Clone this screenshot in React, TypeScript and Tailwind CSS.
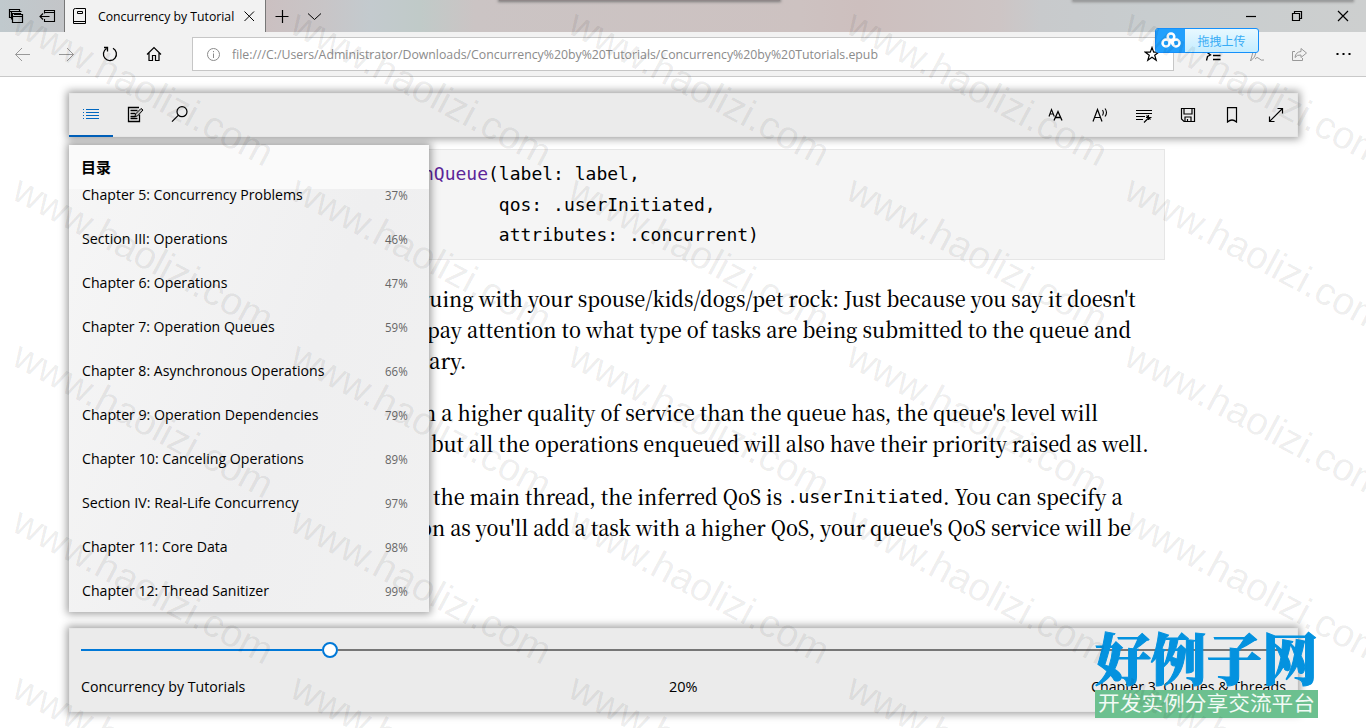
import { useLayoutEffect, useRef, useState, type ReactNode } from "react";

/** Text that is stretched or condensed horizontally to a given width. */
function Fit({ w, className = "", right = false, children }: { w: number; className?: string; right?: boolean; children: ReactNode }) {
  const ref = useRef<HTMLSpanElement>(null);
  const [s, setS] = useState(1);
  useLayoutEffect(() => {
    const measure = () => { if (ref.current) setS(w / ref.current.offsetWidth); };
    measure();
    document.fonts?.ready.then(measure);
  }, [w]);
  return (
    <span className={"flex shrink-0 " + (right ? "justify-end" : "justify-start")} style={{ width: w }}>
      <span ref={ref} className={"block shrink-0 whitespace-pre " + (right ? "origin-right " : "origin-left ") + className} style={{ transform: `scaleX(${s})` }}>
        {children}
      </span>
    </span>
  );
}

function Icon({ children, className = "", size = 16 }: { children: ReactNode; className?: string; size?: number }) {
  return (
    <svg width={size} height={size} viewBox={`0 0 ${size} ${size}`} fill="none" stroke="currentColor" strokeWidth="1" className={"shrink-0 " + className}>
      {children}
    </svg>
  );
}

const chapters: [string, number, string][] = [
  ["Chapter 5: Concurrency Problems", 221, "37%"],
  ["Section III: Operations", 146, "46%"],
  ["Chapter 6: Operations", 145, "47%"],
  ["Chapter 7: Operation Queues", 193, "59%"],
  ["Chapter 8: Asynchronous Operations", 242, "66%"],
  ["Chapter 9: Operation Dependencies", 236, "79%"],
  ["Chapter 10: Canceling Operations", 222, "89%"],
  ["Section IV: Real-Life Concurrency", 217, "97%"],
  ["Chapter 11: Core Data", 146, "98%"],
  ["Chapter 12: Thread Sanitizer", 187, "99%"],
];

function TitleBar() {
  return (
    <div className="flex h-8 shrink-0 overflow-hidden bg-[linear-gradient(90deg,#c0c9cd_0px,#c3c5c8_64px,#cbc0c1_266px,#c8c5c7_325px,#c3cace_370px,#c0cac8_420px,#cbc4c4_475px,#cdc2c1_800px,#cdbfbe_860px,#cdc5c5_1000px,#c8cacc_1040px,#c8cdcf_1150px,#cdcfcf_1366px)]">
      <div className="flex w-16 shrink-0 items-center gap-[15px] pl-2">
        <Icon><path strokeWidth="1.2" d="M3.500 9.500h-2v-8h10v2M1.500 3.500h10M3.500 11.500v-8h10M6 6.500h8.500v8h-10v-9h8v1M4.500 8.500h10" /></Icon>
        <Icon size={17}><path strokeWidth="1.1" d="M5.500 5.500v-3h10v11h-10v-2.500M5.500 4.500h10M1 8.500h9.500M4 5.500l-3 3 3 3" /></Icon>
      </div>
      <div className="flex w-[202px] shrink-0 items-center border-x border-[#777] bg-[#f2f2f2] pl-[7px]">
        <Icon className="mr-[10px]"><path d="M3.500 .5h10v15h-12v-13.500q0-1.500 2-1.500M1.500 13.500h12M5.500 3.500h5v2h-5z" /></Icon>
        <Fit w={136} className="font-['Open_Sans','Noto_Sans',sans-serif] text-[13.5px] leading-8">Concurrency by Tutorial</Fit>
        <Icon className="ml-[7px]"><path d="M3.500 3.500l9.500 9.500M13 3.500l-9.500 9.500" /></Icon>
      </div>
      <div className="flex items-center gap-4 pl-2">
        <Icon><path strokeWidth="1.2" d="M1.500 8.500h13M8.500 2v13" /></Icon>
        <Icon><path d="M2 5.500l6.500 6 6.500-6" /></Icon>
      </div>
      <div className="ml-[177px] h-px w-[281px] shrink-0 bg-[#8f8788] shadow-[0_0_3px_1px_#777]" />
      <div className="ml-[293px] h-px w-[280px] shrink-0 bg-[#9a9c9d] shadow-[0_0_3px_1px_#888]" />
      <div className="-ml-[110px] flex shrink-0 items-center gap-[30px]">
        <Icon><path strokeWidth="1.2" d="M3 8.500h10" /></Icon>
        <Icon><path strokeWidth="1.2" d="M3.500 5.500h7v7h-7zM5.500 5v-1.500h7v7h-1.500" /></Icon>
        <Icon><path strokeWidth="1.2" d="M3 3l10 10M13 3l-10 10" /></Icon>
      </div>
    </div>
  );
}

function AddressBar() {
  return (
    <div className="flex h-[45px] shrink-0 items-center border-b border-[#c9c9c9] bg-[#f2f2f2] pl-[14px]">
      <Icon className="text-[#999]"><path d="M16 8.500H1.500M8 2L1.500 8.500l6.500 6.500" /></Icon>
      <Icon className="ml-7 text-[#999]"><path d="M1 8.500h14.500M9 2l6.500 6.500-6.500 6.500" /></Icon>
      <Icon className="ml-7"><path strokeWidth="1.3" d="M11 2.300A6.500 6.500 0 1 1 4.500 2.500M2 1.500h3.500v4" /></Icon>
      <Icon className="ml-7"><path strokeWidth="1.2" d="M1 8.500l7-7 7 7M3 7v7.500h3.500v-5h3v5H13V7" /></Icon>
      <div className="ml-[30px] flex h-[34px] w-[982px] shrink-0 items-center border border-[#c6c6c6] bg-white pl-[13px] text-[#8b8b8b]">
        <Icon size={15}><circle cx="7.500" cy="7.500" r="6" /><path d="M7.500 6.500v4.500M7.500 4v1.200" /></Icon>
        <div className="ml-[11px]">
          <Fit w={646} className="font-['Open_Sans','Noto_Sans',sans-serif] text-[13px] leading-8">file:///C:/Users/Administrator/Downloads/Concurrency%20by%20Tutorials/Concurrency%20by%20Tutorials.epub</Fit>
        </div>
        <Icon className="ml-[266px] text-black"><path strokeWidth="1.200" d="M8 1.500l1.700 4.700h4.900l-3.900 3 1.500 5L8 11.200l-4.200 3 1.500-5-3.900-3h4.900z" /></Icon>
      </div>
      <Icon className="ml-[31px] text-black"><path strokeWidth="1.300" d="M1 5.500l4.500 3.500-3 1.500-1 4M8 9.500h7.500M8 13.500h7.500" /></Icon>
      <Icon className="ml-7 text-[#999]"><path d="M1.500 15L4 6q1-4 2.500-3t-1 8L1.500 15M6 13q2-3 4-.500t5 1.500" /></Icon>
      <Icon className="ml-[26px] text-[#999]"><path d="M4 5.500H1.500v9h10V12M4 11.500q.5-5.500 6-6V2.500l5.500 4.500-5.500 4.500V9Q6 8.500 4 11.500z" /></Icon>
      <Icon className="ml-7 text-black"><path strokeWidth="2" d="M1.500 8h2M7.500 8h2M13.500 8h2" /></Icon>
    </div>
  );
}

const panel = "border border-[#e6e6e6] bg-[#ebebeb] shadow-[0_0_8px_2px_rgba(0,0,0,0.38)]";

function ReaderToolbar() {
  return (
    <div className={"relative z-10 mx-[69px] mr-[68px] mt-4 flex h-11 shrink-0 items-center " + panel}>
      <div className="-ml-px flex h-11 w-11 shrink-0 items-center justify-center border-b-2 border-[#005fb8] pt-px text-[#0067c0]">
        <Icon><path d="M0 2.500h1M3 2.500h13M0 5.500h1M3 5.500h13M0 8.500h1M3 8.500h13M0 11.500h1M3 11.500h13" /></Icon>
      </div>
      <div className="ml-[14px] -mt-0.5 flex gap-[27px]">
        <Icon size={17}><path strokeWidth="1.300" d="M12 1.500H1.500v14h11V8.500M3.500 4.500h7M3.500 7.500h5M3.500 10.500h5M3.500 12.500h7" /><path fill="#bbb" d="M8 10.500l.5-2.500L14 2.500 16 4l-5.500 6z" /></Icon>
        <Icon size={17}><circle cx="11" cy="5.700" r="5" strokeWidth="1.200" /><path strokeWidth="1.200" d="M7.500 9.200L1 15.700" /></Icon>
      </div>
      <div className="ml-auto flex items-center gap-7 pr-[13px]">
        <Icon><path strokeWidth="1.100" d="M1 9.500L3.500 2.500l2.800 7M2 7h3.500" /><path strokeWidth="1.300" d="M6 13.500l4-9 4 9M7.500 10.500h5" /></Icon>
        <Icon><path strokeWidth="1.200" d="M1 14.500L5.500 2.500 10 14.500M2.500 10.500h6" /><path strokeWidth="1.1" d="M10.500 3q1.700 2.500 0 5.500M13 1.500q3 4 0 8" /></Icon>
        <Icon><path strokeWidth="1.1" d="M0 3.500h16M0 6.500h16M0 9.500h9M0 12.500h7M8 15.500l5-5M12.500 8v5M10 10.500h5.500M10.500 8.500l4 4" /></Icon>
        <Icon><path strokeWidth="1.200" d="M1.500 1.500h13v13H4l-2.500-2.500zM4 2v5h8V2M5 14v-4h6v4M7.500 12v2" /></Icon>
        <Icon><path strokeWidth="1.200" d="M3.500 .7h9v14.300q-4.500-4-9 0z" /></Icon>
        <Icon><path strokeWidth="1.200" d="M1.500 14.500L14.500 1.500M9.500 1.500h5V6.500M1.500 9.500v5h5" /></Icon>
      </div>
    </div>
  );
}

function Contents() {
  return (
    <div className="absolute left-[69px] top-[145px] z-20 flex h-[467px] w-[360px] flex-col overflow-hidden bg-[linear-gradient(110deg,#f6f6f6,#efeff0_60%,#f1f1f1)] font-['Open_Sans','Noto_Sans',sans-serif]">
      <div className="h-11 shrink-0 bg-[#fafafa] pl-3 pt-[11px] font-['Noto_Sans_CJK_SC',sans-serif] text-[15px] font-bold leading-[22px]">目录</div>
      <div className="-mt-4 flex flex-col pl-[13px] pr-[21px]">
        {chapters.map(([name, w, pct]) => (
          <div key={name} className="flex h-11 shrink-0 items-center justify-between">
            <Fit w={w} className="text-[14.5px] leading-[20px]">{name}</Fit>
            <Fit w={23} right className="pt-px text-[12px] leading-[22px] text-[#666]">{pct}</Fit>
          </div>
        ))}
      </div>
    </div>
  );
}

function Line({ w, children }: { w: number; children: ReactNode }) {
  return (
    <div className="flex h-[31px] items-center">
      <Fit w={w} className="-mt-[3px] text-[21.5px] font-medium leading-[31px]">{children}</Fit>
    </div>
  );
}

function Page() {
  return (
    <div className="ml-[201px] mt-3 w-[964px] shrink-0 font-['Noto_Serif_CJK_SC','Liberation_Serif',serif] text-black">
      <div className="h-[111px] border border-[#e6e6e6] bg-[#f5f5f5] pl-[221px] pt-[9px] font-['DejaVu_Sans_Mono',monospace] text-[18px] leading-[30.5px] whitespace-pre">
        <div><span className="text-[#5c2699]">nQueue</span>(label: label,</div>
        <div>       qos: .userInitiated,</div>
        <div>       attributes: .concurrent)</div>
      </div>
      <div className="pl-[219px]">
        <div className="mt-[23px]">
          <div><Line w={716}>ruing with your spouse/kids/dogs/pet rock: Just because you say it doesn't</Line></div>
          <div className="pl-[7px]"><Line w={704}>pay attention to what type of tasks are being submitted to the queue and</Line></div>
          <div className="pl-[9px]"><Line w={37}>ary.</Line></div>
        </div>
        <div className="mt-[21px]">
          <div className="pl-[3px]"><Line w={675}>n a higher quality of service than the queue has, the queue's level will</Line></div>
          <div className="pl-[11px]"><Line w={718}>but all the operations enqueued will also have their priority raised as well.</Line></div>
        </div>
        <div className="mt-[22px]">
          <div className="flex pl-[13px]">
            <Line w={349}>the main thread, the inferred QoS is</Line>
            <span className="ml-[5px] font-['DejaVu_Sans_Mono',monospace] text-[18.500px] leading-[31px]">.userInitiated</span>
            <Line w={180}>. You can specify a</Line>
          </div>
          <div><Line w={711}>on as you'll add a task with a higher QoS, your queue's QoS service will be</Line></div>
        </div>
      </div>
    </div>
  );
}

function Progress() {
  return (
    <div className={"ml-[69px] mr-[68px] mt-auto mb-4 h-[84px] shrink-0 px-[11px] pt-[13px] font-['Open_Sans','Noto_Sans',sans-serif] " + panel}>
      <div className="flex h-4 items-center">
        <div className="h-0.5 w-[241px] bg-[#0078d7]" />
        <div className="h-4 w-4 rounded-full border-2 border-[#0078d7] bg-white" />
        <div className="h-0.5 flex-1 bg-[#767676]" />
      </div>
      <div className="mt-[18px] flex justify-between text-[14.500px] leading-[22px]">
        <Fit w={164}>Concurrency by Tutorials</Fit>
        <div className="ml-[31px]"><Fit w={29}>20%</Fit></div>
        <Fit w={195}>Chapter 3: Queues &amp; Threads</Fit>
      </div>
    </div>
  );
}

function UploadBadge() {
  return (
    <div className="absolute left-[1155px] top-7 z-30 flex h-[25px] w-[104px] overflow-hidden rounded-[3px] border border-[#1590fb] bg-gradient-to-b from-[#e8f8ff] to-[#c4edff]">
      <div className="flex w-[29px] items-center justify-center bg-[#22a0fd]">
        <svg width="20" height="17" viewBox="0 0 20 17" fill="none" stroke="white" strokeWidth="2.500">
          <circle cx="10" cy="4.800" r="3.300" /><circle cx="5" cy="11" r="3.500" /><circle cx="15" cy="11" r="3.500" /><path d="M8 8l5 5" />
        </svg>
      </div>
      <div className="flex-1 text-center font-['Noto_Sans_CJK_SC',sans-serif] text-[12px] leading-[23px] text-[#38acf5]">拖拽上传</div>
    </div>
  );
}

function SiteLogo() {
  return (
    <div className="absolute left-[1095px] top-[626px] z-30 w-[223px]">
      <div className="h-16 font-['Noto_Serif_CJK_SC','Noto_Sans_CJK_SC',serif] text-[#0492df]">
        <Fit w={223} className="text-[56px] font-black leading-[60px] [-webkit-text-stroke:1px_#0492df]">好例子网</Fit>
      </div>
      <div className="flex h-7 items-center bg-[#6cc08f] pl-[3px] font-['Noto_Sans_CJK_SC',sans-serif] text-[#f2faf5]">
        <Fit w={217} className="-mt-0.5 text-[20px] leading-7">开发实例分享交流平台</Fit>
      </div>
    </div>
  );
}

function Watermark() {
  const xs = [10, 288, 566, 844, 1122];
  const ys = [32, 198, 364, 530, 696];
  return (
    <div className="pointer-events-none absolute inset-0 z-40 overflow-hidden">
      {ys.flatMap((y) => xs.map((x) => (
        <span key={`${x}-${y}`} className="absolute origin-[0_33px] rotate-[28deg] whitespace-nowrap font-['Liberation_Sans',sans-serif] text-[39px] leading-none text-black/8" style={{ left: x, top: y - 33 }}>
          www.haolizi.com
        </span>
      )))}
    </div>
  );
}

export default function App() {
  return (
    <div className="relative flex h-[728px] w-[1366px] flex-col overflow-hidden bg-white text-black">
      <TitleBar />
      <AddressBar />
      <ReaderToolbar />
      <Page />
      <Progress />
      <div className="absolute left-[69px] top-[145px] h-[467px] w-[360px] shadow-[0_0_8px_2px_rgba(0,0,0,0.38)]" />
      <Contents />
      <UploadBadge />
      <SiteLogo />
      <Watermark />
    </div>
  );
}
